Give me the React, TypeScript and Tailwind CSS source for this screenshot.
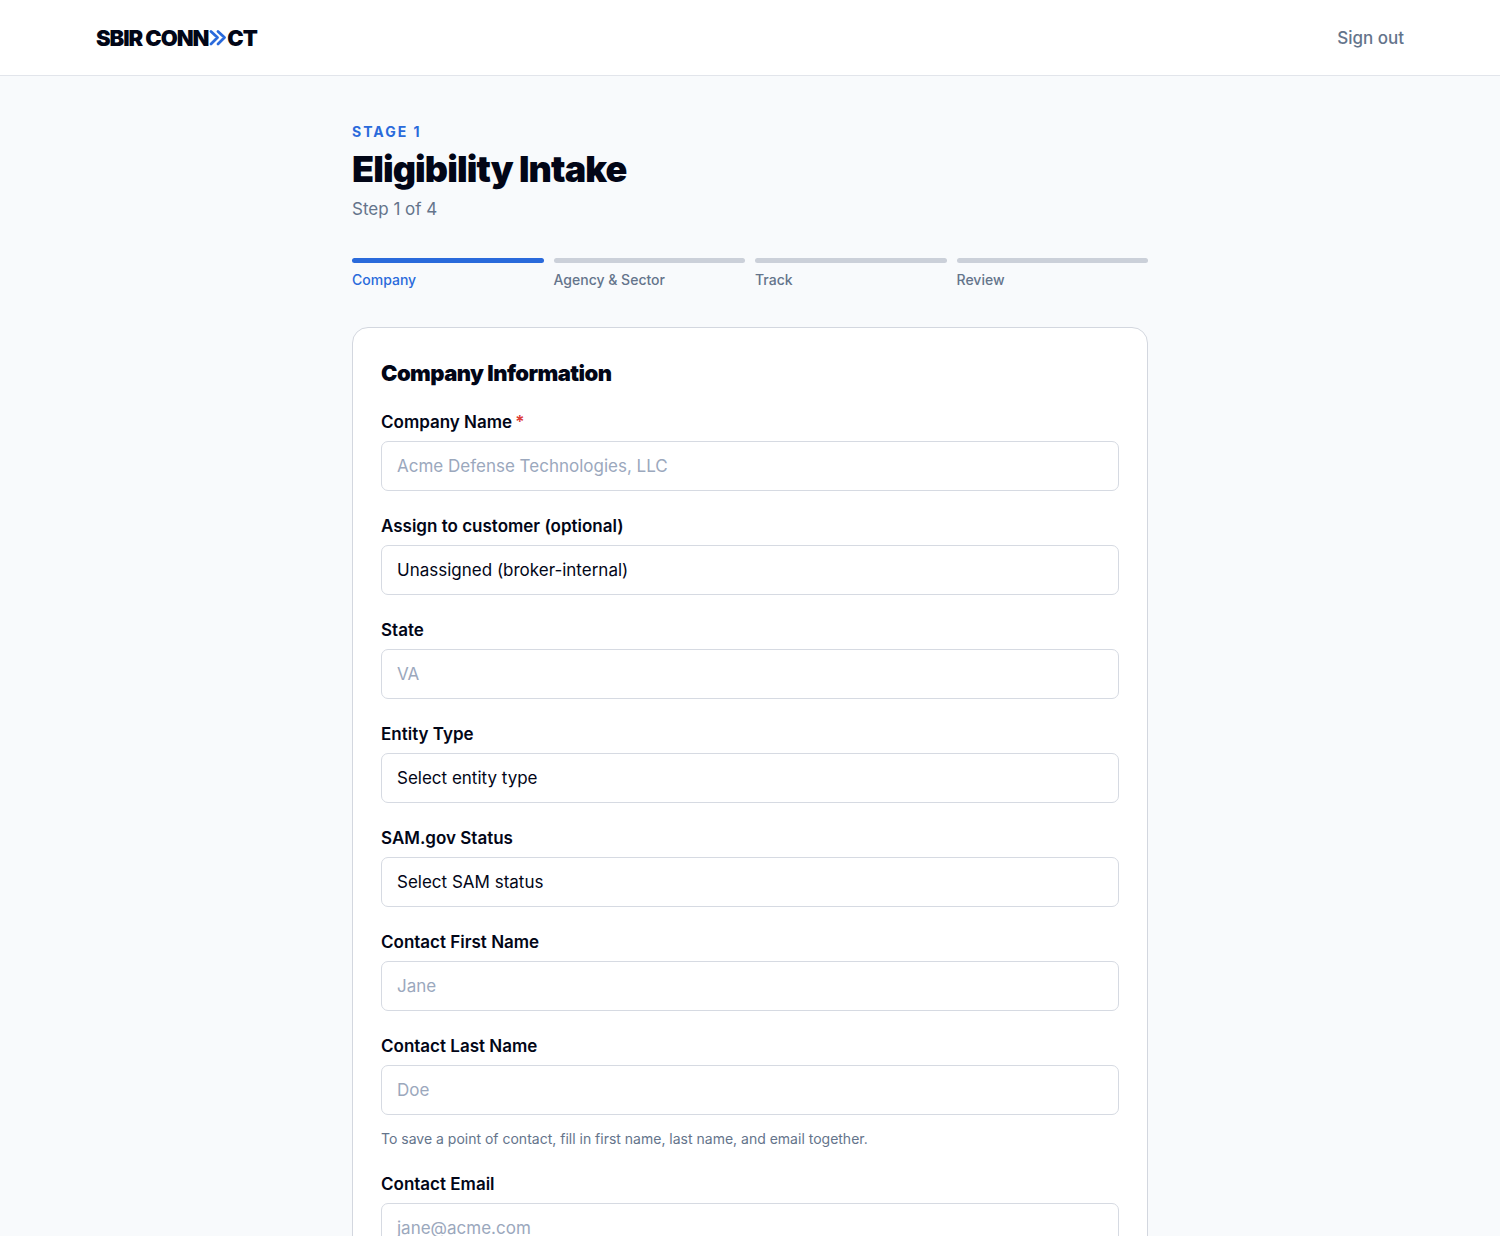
import React from "react";

const steps = ["Company", "Agency & Sector", "Track", "Review"];
const currentStep = 0;

type FieldConfig = {
  id: string;
  label: string;
  required?: boolean;
  placeholder?: string;
  type?: string;
  options?: string[];
  hint?: string;
};

const fields: FieldConfig[] = [
  { id: "company-name", label: "Company Name", required: true, placeholder: "Acme Defense Technologies, LLC" },
  { id: "customer", label: "Assign to customer (optional)", options: ["Unassigned (broker-internal)"] },
  { id: "state", label: "State", placeholder: "VA" },
  { id: "entity-type", label: "Entity Type", options: ["Select entity type"] },
  { id: "sam-status", label: "SAM.gov Status", options: ["Select SAM status"] },
  { id: "first-name", label: "Contact First Name", placeholder: "Jane" },
  {
    id: "last-name",
    label: "Contact Last Name",
    placeholder: "Doe",
    hint: "To save a point of contact, fill in first name, last name, and email together."
  },
  { id: "email", label: "Contact Email", type: "email", placeholder: "jane@acme.com" }
];

const controlClass =
  "block w-full appearance-none rounded-[7px] border border-[#d6dae2] bg-white px-[15px] py-3 text-[17px] leading-6 text-[#020617] placeholder:text-[#9ba8bd] focus:outline-none focus:border-[#2a6adb]";

function Logo() {
  return (
    <a href="/" aria-label="SBIR Connect" className="flex items-center text-[22px] leading-7 font-black tracking-tighter text-[#020617]">
      SBIR CONN
      <svg viewBox="0 0 19 18" className="w-[19px] h-[18px]" fill="none" stroke="#2a6adb" strokeWidth="2.8" strokeLinecap="round" strokeLinejoin="round">
        <path d="M3 2.500 9.500 8.500l-6.500 6.500M10 2.500 16.500 8.500l-6.500 6.500" />
      </svg>
      CT
    </a>
  );
}

function Field({ id, label, required, placeholder, type = "text", options, hint }: FieldConfig) {
  return (
    <div>
      <label htmlFor={id} className="block mb-[7px] text-[17px] leading-6 font-semibold text-[#020617]">
        {label}
        {required && <span className="ml-[3px] text-[#dc3b35]">*</span>}
      </label>
      {options ? (
        <select id={id} className={controlClass}>
          {options.map((option) => (
            <option key={option}>{option}</option>
          ))}
        </select>
      ) : (
        <input id={id} type={type} placeholder={placeholder} required={required} className={controlClass} />
      )}
      {hint && <p className="mt-[14px] text-sm leading-5 text-[#64748b]">{hint}</p>}
    </div>
  );
}

export default function App() {
  return (
    <div className="min-h-screen bg-[#f8fafc] font-['Inter',sans-serif] antialiased">
      <header className="border-b border-[#e2e5eb] bg-white">
        <div className="mx-auto flex h-[75px] max-w-[1356px] items-center justify-between px-6">
          <Logo />
          <button type="button" className="text-[17px] leading-6 font-medium text-[#64748b]">
            Sign out
          </button>
        </div>
      </header>

      <main className="mx-auto max-w-[844px] px-6 pt-[46px] pb-12">
        <p className="text-sm leading-5 font-bold tracking-[2px] text-[#2a6adb] uppercase">Stage 1</p>
        <h1 className="mt-[6px] text-4xl leading-[42px] font-black tracking-tight text-[#020617]">Eligibility Intake</h1>
        <p className="mt-[7px] text-[17px] leading-6 text-[#64748b]">Step 1 of 4</p>

        {/* Progress */}
        <ol className="mt-[37px] grid grid-cols-4 gap-[10px]">
          {steps.map((step, idx) => (
            <li key={step}>
              <div className={`h-[5px] rounded-full ${idx <= currentStep ? "bg-[#2a6adb]" : "bg-[#cbd0d9]"}`} />
              <span
                className={`mt-[7px] block text-sm leading-5 font-medium ${
                  idx <= currentStep ? "text-[#2a6adb]" : "text-[#64748b]"
                }`}
              >
                {step}
              </span>
            </li>
          ))}
        </ol>

        <form className="mt-[37px] rounded-2xl border border-[#d3d7df] bg-white p-7">
          <h2 className="mb-5 text-[22px] leading-[34px] font-black tracking-tight text-[#020617]">Company Information</h2>
          <div className="flex flex-col gap-[23px]">
            {fields.map((field) => (
              <Field key={field.id} {...field} />
            ))}
          </div>
        </form>
      </main>
    </div>
  );
}
